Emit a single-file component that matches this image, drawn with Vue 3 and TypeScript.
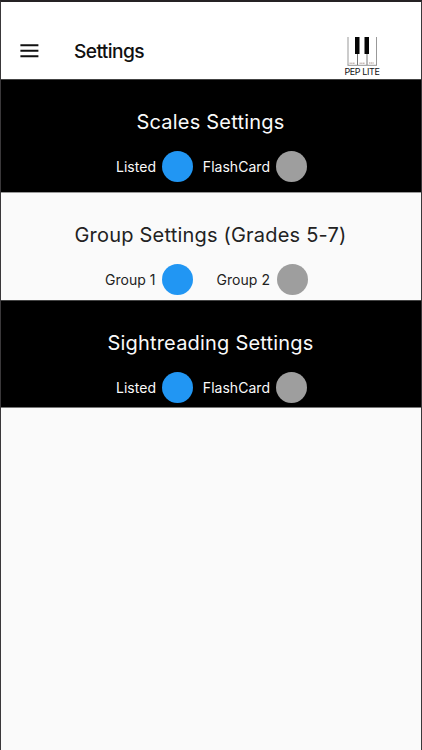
<script setup lang="ts">
import { ref } from 'vue'

interface Section {
  title: string
  theme: 'dark' | 'light'
  spacing: string
  options: string[]
}

const sections: Section[] = [
  { title: 'Scales Settings', theme: 'dark', spacing: 'scales', options: ['Listed', 'FlashCard'] },
  { title: 'Group Settings (Grades 5-7)', theme: 'light', spacing: 'group', options: ['Group 1', 'Group 2'] },
  { title: 'Sightreading Settings', theme: 'dark', spacing: 'sight', options: ['Listed', 'FlashCard'] },
]

const selected = ref<number[]>([0, 0, 0])
</script>

<template>
  <div class="screen">
    <header class="bar">
      <svg class="menu" width="19" height="14" viewBox="0 0 19 14">
        <path d="M0.4 1.2H18.4M0.4 6.7H18.4M0.4 12.2H18.4" stroke="#111" stroke-width="2" />
      </svg>
      <h1 class="bar-title">Settings</h1>
      <div class="logo">
        <svg width="31" height="29" viewBox="0 0 31 29">
          <path d="M1 0V28M29.5 0V28" stroke="#999" stroke-width="1" />
          <path d="M10.5 17V28M20 17V28" stroke="#777" stroke-width="1" />
          <path d="M0.5 28.3H30" stroke="#777" stroke-width="0.8" />
          <path d="M2.5 26.2H8M12.5 26.2H18M22 26H27" stroke="#aa9790" stroke-width="1" stroke-dasharray="1.3 .4" />
          <path d="M8 0H12.5V17H8ZM17.5 0H22V17H17.5Z" fill="#050505" />
        </svg>
        <span class="logo-name">PEP LITE</span>
      </div>
    </header>
    <section v-for="(s, i) in sections" :key="s.title" class="section" :class="[s.theme, s.spacing]">
      <h2 class="title">{{ s.title }}</h2>
      <div class="options">
        <div v-for="(o, j) in s.options" :key="o" class="option" @click="selected[i] = j">
          <span class="label">{{ o }}</span>
          <span class="dot" :class="{ on: selected[i] === j }"></span>
        </div>
      </div>
    </section>
  </div>
</template>

<style>
body {
  background: #fafafa;
}
</style>

<style scoped>
.screen {
  box-sizing: border-box;
  height: 750px;
  border: 1px solid #3a383a;
  border-top: 2px solid #252224;
  border-bottom: 0;
  background: #fafafa;
  font-family: Inter, "Liberation Sans", sans-serif;
  overflow: hidden;
}
.bar {
  box-sizing: border-box;
  height: 77px;
  padding: 20px 41px 0 19px;
  display: flex;
  align-items: center;
  background: #fff;
}
.menu {
  flex: none;
}
.bar-title {
  margin: 0 0 0 35px;
  flex: 1;
  font-size: 19.2px;
  line-height: 24px;
  font-weight: 500;
  letter-spacing: -0.6px;
  color: #111;
}
.logo {
  display: flex;
  flex-direction: column;
  align-items: center;
  width: 36px;
  padding-top: 13px;
}
.logo svg {
  display: block;
  margin-left: 1px;
}
.logo-name {
  font-size: 9px;
  line-height: 11px;
  letter-spacing: -0.4px;
  white-space: nowrap;
  color: #111;
}
.section {
  box-sizing: border-box;
  height: 108px;
  padding-top: 28px;
  border-top: 1px solid #444;
}
.scales {
  height: 113px;
}
.dark {
  background: #000;
  color: #fafafa;
}
.light {
  background: #fafafa;
  color: #222;
  border-top-color: #999;
}
.sight {
  border-bottom: 1px solid #777;
}
.title {
  margin: 0;
  padding-right: 1px;
  text-align: center;
  font-size: 20px;
  line-height: 28px;
  font-weight: 400;
  letter-spacing: 0.2px;
  white-space: nowrap;
}
.options {
  display: flex;
  margin: 15px 0 0 78px;
}
.option {
  width: 114px;
  display: flex;
  align-items: center;
  justify-content: flex-end;
  gap: 6px;
}
.group .option {
  width: 114.5px;
  gap: 6.5px;
}
.group .options {
  margin-left: 77.5px;
}
.label {
  font-size: 14px;
  line-height: 20px;
  letter-spacing: 0.03px;
  white-space: nowrap;
}
.dot {
  width: 31px;
  height: 31px;
  flex: none;
  border-radius: 50%;
  background: #9e9e9e;
}
.dot.on {
  background: #2196f3;
}
</style>
